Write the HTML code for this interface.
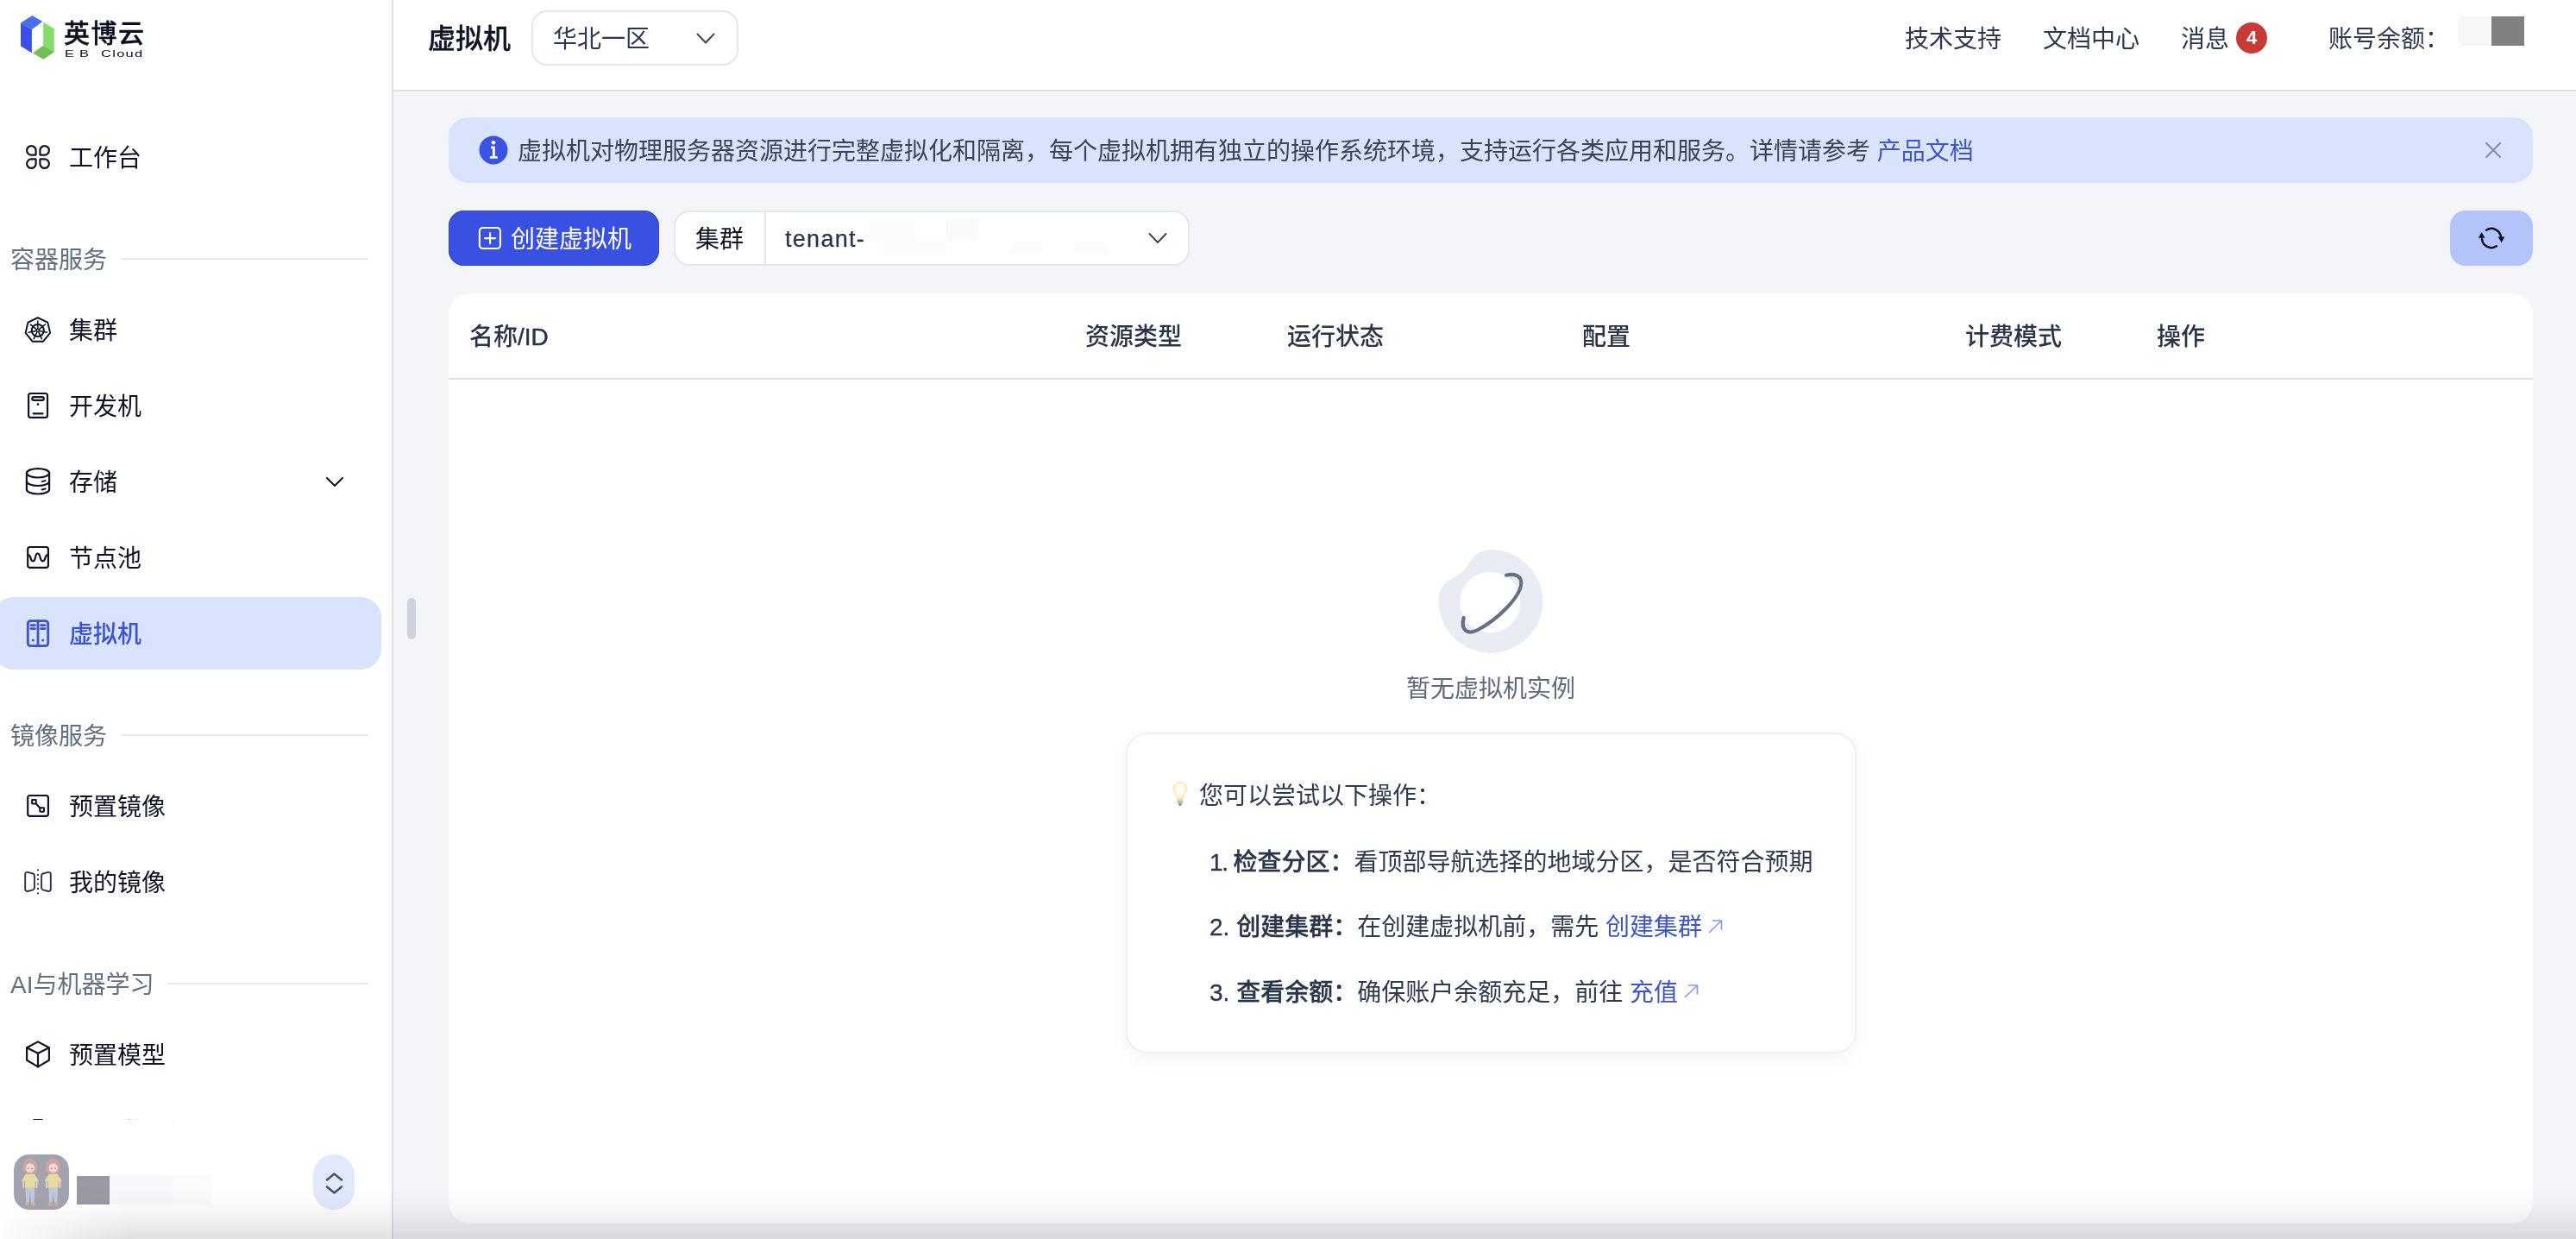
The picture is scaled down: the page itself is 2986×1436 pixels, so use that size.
<!DOCTYPE html>
<html lang="zh-CN">
<head>
<meta charset="utf-8">
<title>虚拟机 - 英博云</title>
<style>
*{box-sizing:border-box;margin:0;padding:0}
html,body{width:2986px;height:1436px;overflow:hidden;background:#f3f5f9}
body{font-family:"Liberation Sans","Noto Sans CJK SC",sans-serif;color:#0f1526;position:relative;-webkit-font-smoothing:antialiased}
.abs{position:absolute}
.t{position:absolute;white-space:nowrap;font-size:28px;line-height:40px;height:40px}
/* sidebar */
#side{position:absolute;left:0;top:0;width:456px;height:1436px;background:#fff;border-right:2px solid #dde0e7}
.nav{position:absolute;left:80px;font-size:28px;line-height:40px;height:40px;white-space:nowrap;color:#0f1526}
.sec{position:absolute;left:12px;font-size:28px;line-height:40px;height:40px;white-space:nowrap;color:#646e81}
.secline{position:absolute;height:2px;background:#e6e9ef}
.ico{position:absolute;overflow:visible}
/* header */
#head{position:absolute;left:456px;top:0;width:2530px;height:106px;background:#fff;border-bottom:2px solid #dcdfe6}
.hl{color:#2d3850}
.th{color:#2a3449;font-weight:500}
.tip{color:#2f3a50}
.tip b{font-weight:500;color:#2a3449;-webkit-text-stroke:0.3px #2a3449}
.lk{color:#3d55c9}
</style>
</head>
<body>
<div id="root" style="position:absolute;left:0;top:0;width:2986px;height:1436px;will-change:transform">
<div id="side">
  <!-- logo -->
  <svg class="ico" style="left:0;top:0" width="200" height="90" viewBox="0 0 200 90">
    <polygon points="37.3,18 49.3,25 36.9,34.3 24,26.4" fill="#4571ee"/>
    <polygon points="24,26.4 36.9,34.3 36.9,61.2 24,53.4" fill="#3a4fe8"/>
    <polygon points="50.2,25.6 62.8,33.4 62.8,60.4 50.2,52.8" fill="#87da6c"/>
    <polygon points="38,61.5 50.2,52.8 62.8,60.4 50.2,68.8" fill="#72bd56"/>
  </svg>
  <div class="abs" id="logocn" style="left:74px;top:17px;font-size:30px;line-height:44px;height:44px;font-weight:500;-webkit-text-stroke:0.35px #0b1020;letter-spacing:1.5px;color:#0b1020;white-space:nowrap">英博云</div>
  <div class="abs" id="logoen" style="left:75px;top:54px;font-size:11px;line-height:16px;height:16px;letter-spacing:4px;color:#0b1020;white-space:nowrap;transform-origin:0 50%;transform:scaleX(1.5)">EB</div>
  <div class="abs" id="logoen2" style="left:117px;top:54px;font-size:11px;line-height:16px;height:16px;letter-spacing:0.85px;color:#0b1020;white-space:nowrap;transform-origin:0 50%;transform:scaleX(1.5)">Cloud</div>

  <!-- 工作台 -->
  <svg class="ico" style="left:28px;top:166px" width="32" height="32" viewBox="-16 -16 32 32" fill="none" stroke="#0f1526" stroke-width="2.2" stroke-linejoin="round">
    <path id="petal" d="M-2.4 -7.65V-2.9a0.5 0.5 0 0 1-0.5 0.5H-7.65a5.25 5.25 0 1 1 5.25-5.25z"/>
    <path d="M-2.4 -7.65V-2.9a0.5 0.5 0 0 1-0.5 0.5H-7.65a5.25 5.25 0 1 1 5.25-5.25z" transform="scale(-1,1)"/>
    <path d="M-2.4 -7.65V-2.9a0.5 0.5 0 0 1-0.5 0.5H-7.65a5.25 5.25 0 1 1 5.25-5.25z" transform="scale(1,-1)"/>
    <path d="M-2.4 -7.65V-2.9a0.5 0.5 0 0 1-0.5 0.5H-7.65a5.25 5.25 0 1 1 5.25-5.25z" transform="scale(-1,-1)"/>
  </svg>
  <div class="nav" style="top:164px">工作台</div>

  <div class="sec" style="top:282px">容器服务</div>
  <div class="secline" style="left:140px;top:299px;width:286px"></div>

  <!-- 集群 -->
  <svg class="ico" style="left:26px;top:364px" width="36" height="36" viewBox="26 364 36 36" fill="none" stroke="#0f1526" stroke-linejoin="round" stroke-linecap="round">
    <g transform="translate(43.9 382.2) scale(0.955) translate(-43.9 -382.2)">
    <polygon points="43.8,367.6 55.8,373.2 58.8,386 50.4,396.3 37.2,396.3 29,386 31.9,373.2" stroke-width="2.05"/>
    <circle cx="43.8" cy="383" r="7.4" stroke-width="2.05"/>
    <g stroke-width="1.6">
      <line x1="43.8" y1="383" x2="43.8" y2="371.6"/>
      <line x1="43.8" y1="383" x2="52.7" y2="375.9"/>
      <line x1="43.8" y1="383" x2="54.9" y2="385.5"/>
      <line x1="43.8" y1="383" x2="48.7" y2="393.3"/>
      <line x1="43.8" y1="383" x2="38.9" y2="393.3"/>
      <line x1="43.8" y1="383" x2="32.7" y2="385.5"/>
      <line x1="43.8" y1="383" x2="34.9" y2="375.9"/>
    </g>
    <circle cx="43.8" cy="383" r="2.4" fill="#0f1526" stroke="none"/>
    <circle cx="43.8" cy="383" r="0.9" fill="#fff" stroke="none"/>
  </g>
  </svg>
  <div class="nav" style="top:364px">集群</div>

  <!-- 开发机 -->
  <svg class="ico" style="left:26px;top:452px" width="36" height="36" viewBox="26 452 36 36" fill="none" stroke="#0f1526" stroke-width="2.2" stroke-linecap="round">
    <rect x="33.1" y="456" width="21.9" height="27.8" rx="2.4"/>
    <rect x="37.3" y="460.1" width="13.5" height="3.7" rx="1.85"/>
    <circle cx="44" cy="468.6" r="1.4" fill="#0f1526" stroke="none"/>
    <line x1="38.6" y1="479.3" x2="49.6" y2="479.3"/>
  </svg>
  <div class="nav" style="top:452px">开发机</div>

  <!-- 存储 -->
  <svg class="ico" style="left:26px;top:540px" width="36" height="36" viewBox="26 540 36 36" fill="none" stroke="#0f1526" stroke-width="2.2" stroke-linecap="round">
    <ellipse cx="44" cy="548.3" rx="13.1" ry="5.2"/>
    <path d="M30.9 548.3V567.3C30.9 570.2 36.8 572.5 44 572.5S57.1 570.2 57.1 567.3V548.3"/>
    <path d="M30.9 557.8C30.9 560.7 36.8 563 44 563S57.1 560.7 57.1 557.8"/>
    <line x1="48.6" y1="558.1" x2="52.6" y2="557.1" stroke-width="2"/>
    <line x1="48.6" y1="567.5" x2="52.6" y2="566.5" stroke-width="2"/>
  </svg>
  <div class="nav" style="top:540px">存储</div>
  <svg class="ico" style="left:376px;top:548px" width="24" height="20" viewBox="376 548 24 20" fill="none" stroke="#0f1526" stroke-width="2" stroke-linecap="round" stroke-linejoin="round">
    <polyline points="379,554 388,563 397,554"/>
  </svg>

  <!-- 节点池 -->
  <svg class="ico" style="left:26px;top:628px" width="36" height="36" viewBox="26 628 36 36" fill="none" stroke="#0f1526" stroke-width="2.2" stroke-linecap="round">
    <rect x="32.2" y="634" width="23.7" height="23.9" rx="2.6"/>
    <path d="M32.6 643C36.6 643 34.4 650.3 38.3 650.3C42.2 650.3 39.8 641.5 43.7 641.5C47.6 641.5 45.5 650.3 49.4 650.3C53.3 650.3 51.4 643 55.4 643"/>
  </svg>
  <div class="nav" style="top:628px">节点池</div>

  <!-- 虚拟机 (active) -->
  <div class="abs" style="left:-8px;top:692px;width:450px;height:84px;border-radius:24px;background:#d9e3fc"></div>
  <svg class="ico" style="left:26px;top:716px" width="36" height="36" viewBox="26 716 36 36" fill="none" stroke="#3a52d6" stroke-width="2.8" stroke-linecap="round">
    <rect x="32.3" y="719.6" width="23.4" height="29" rx="3.2"/>
    <line x1="44" y1="719.6" x2="44" y2="748.6"/>
    <line x1="35.9" y1="724.6" x2="40.6" y2="724.6"/>
    <line x1="35.9" y1="728.6" x2="40.6" y2="728.6"/>
    <line x1="47.4" y1="724.6" x2="52.1" y2="724.6"/>
    <line x1="47.4" y1="728.6" x2="52.1" y2="728.6"/>
    <circle cx="38.3" cy="742" r="1.6" fill="#3a52d6" stroke="none"/>
    <circle cx="49.7" cy="742" r="1.6" fill="#3a52d6" stroke="none"/>
  </svg>
  <div class="nav" style="top:716px;color:#3a52d6;font-weight:500">虚拟机</div>

  <div class="sec" style="top:834px">镜像服务</div>
  <div class="secline" style="left:140px;top:851px;width:286px"></div>

  <!-- 预置镜像 -->
  <svg class="ico" style="left:26px;top:916px" width="36" height="36" viewBox="26 916 36 36" fill="none" stroke="#0f1526" stroke-width="2.2" stroke-linecap="round" stroke-linejoin="round">
    <rect x="32.2" y="922" width="23.7" height="23.8" rx="2.6"/>
    <rect x="37.1" y="927.1" width="4.7" height="4.4" rx="0.4" stroke-width="2" stroke-linejoin="miter"/>
    <rect x="46.3" y="936.3" width="4.7" height="4.4" rx="0.4" stroke-width="2" stroke-linejoin="miter"/>
    <line x1="42" y1="931.7" x2="46.2" y2="936.2" stroke-width="2"/>
  </svg>
  <div class="nav" style="top:916px">预置镜像</div>

  <!-- 我的镜像 -->
  <svg class="ico" style="left:26px;top:1004px" width="36" height="36" viewBox="26 1004 36 36" fill="none" stroke="#2a3347" stroke-width="1.9" stroke-linejoin="round">
    <path d="M29.2 1013.2a2.4 2.4 0 0 1 2.9-2.3l6 1.6a2.4 2.4 0 0 1 1.8 2.3v14.3a2.4 2.4 0 0 1-1.8 2.3l-6 1.6a2.4 2.4 0 0 1-2.9-2.3z"/>
    <path d="M58.8 1013.2a2.4 2.4 0 0 0-2.9-2.3l-6 1.6a2.4 2.4 0 0 0-1.8 2.3v14.3a2.4 2.4 0 0 0 1.8 2.3l6 1.6a2.4 2.4 0 0 0 2.9-2.3z"/>
    <line x1="44" y1="1007.5" x2="44" y2="1036.5" stroke="#141a2a" stroke-width="1.800" stroke-dasharray="1.800 3.600"/>
  </svg>
  <div class="nav" style="top:1004px">我的镜像</div>

  <div class="sec" style="top:1122px">AI与机器学习</div>
  <div class="secline" style="left:194px;top:1139px;width:232px"></div>

  <!-- 预置模型 -->
  <svg class="ico" style="left:26px;top:1204px" width="36" height="36" viewBox="26 1204 36 36" fill="none" stroke="#0f1526" stroke-width="2.2" stroke-linecap="round" stroke-linejoin="round">
    <polygon points="44,1207.4 56.9,1214.3 56.9,1228.7 44,1236.4 31.1,1228.7 31.1,1214.3"/>
    <polyline points="31.1,1214.3 44,1220.8 56.9,1214.3"/>
    <line x1="44" y1="1220.8" x2="44" y2="1236.4"/>
  </svg>
  <div class="nav" style="top:1204px">预置模型</div>

  <!-- clipped next item -->
  <div class="abs" style="left:0;top:1268px;width:454px;height:30px;overflow:hidden">
    <div class="nav" style="top:25px;left:137px">微调优</div>
    <div class="abs" style="left:38px;top:28.500px;width:12px;height:2px;background:#2a3040;border-radius:1px"></div>
  </div>

  <!-- user block -->
  <div class="abs" style="left:16px;top:1338px;width:64px;height:64px;border-radius:18px;background:#a3a3b0;overflow:hidden">
    <svg width="64" height="64" viewBox="0 0 64 64">
      <g id="girl" opacity="0.85">
        <path d="M10.500 15c0-6 3.600-10.200 8.400-10.200s8.400 4.200 8.400 10.200c0 3-1.200 5.400-2.400 6.400h-12c-1.200-1-2.400-3.400-2.400-6.400z" fill="#dba49c"/>
        <ellipse cx="18.900" cy="15.600" rx="5.200" ry="5.400" fill="#f6e4dc"/>
        <path d="M13.300 12.500c2-3 8-4 11.200 0c-1-4.500-9.500-5-11.200 0z" fill="#dba49c"/>
        <circle cx="16.700" cy="16.200" r="0.900" fill="#c9837c"/><circle cx="21.100" cy="16.200" r="0.900" fill="#c9837c"/>
        <path d="M14 22.500h9.800l5.200 8.200-3 1.600-1.200-1.800v8.300H13v-8.300l-1.200 1.800-3-1.600z" fill="#f3e3a0"/>
        <rect x="10.300" y="31" width="1.800" height="8" rx="0.900" fill="#f3dcd2"/>
        <rect x="25.700" y="31" width="1.800" height="8" rx="0.900" fill="#f3dcd2"/>
        <path d="M13.600 38.800h10.600l-0.600 17h-3.600l-1.100-13-1.100 13h-3.600z" fill="#c3d0e2"/>
        <rect x="13.200" y="55.600" width="4.800" height="4" rx="1.600" fill="#e0b48f"/>
        <rect x="19.800" y="55.600" width="4.800" height="4" rx="1.600" fill="#e0b48f"/>
      </g>
      <use href="#girl" x="26.800"/>
    </svg>
  </div>
  <div class="abs" style="left:89px;top:1363px;width:38px;height:33px;background:#9a9aa2"></div>
  <div class="abs" style="left:127px;top:1363px;width:73px;height:33px;background:#f8f8fc"></div><div class="abs" style="left:200px;top:1363px;width:45px;height:33px;background:#fbfbfe"></div>
  <div class="abs" style="left:363px;top:1338px;width:48px;height:64px;border-radius:24px;background:#e2e9fd"></div>
  <svg class="ico" style="left:375px;top:1354px" width="26" height="34" viewBox="375 1354 26 34" fill="none" stroke="#4a5468" stroke-width="2.6" stroke-linecap="round" stroke-linejoin="round">
    <polyline points="379,1367.4 387.5,1360.6 396,1367.4"/>
    <polyline points="379,1375.6 387.5,1382.4 396,1375.6"/>
  </svg>
</div>
<div id="head">
  <div class="abs" id="ptitle" style="left:40px;top:23px;font-size:32px;line-height:44px;height:44px;font-weight:500;-webkit-text-stroke:0.3px #0f1526;color:#0f1526;white-space:nowrap">虚拟机</div>
  <div class="abs" style="left:160px;top:12px;width:240px;height:64px;border:2px solid #e3e7ee;border-radius:18px;background:#fff"></div>
  <div class="t" id="region" style="left:185px;top:26px;color:#2d3850">华北一区</div>
  <svg class="ico" style="left:348px;top:34px" width="28" height="22" viewBox="0 0 28 22" fill="none" stroke="#3d475c" stroke-width="2" stroke-linecap="round" stroke-linejoin="round"><polyline points="4.500,5.500 14,15.500 23.500,5.500"/></svg>

  <div class="t hl" style="left:1752px;top:26px">技术支持</div>
  <div class="t hl" style="left:1912px;top:26px">文档中心</div>
  <div class="t hl" style="left:2072px;top:26px">消息</div>
  <div class="abs" style="left:2136px;top:26px;width:36px;height:36px;border-radius:18px;background:#c83a35;color:#fff;font-size:22px;line-height:36px;text-align:center;font-weight:700">4</div>
  <div class="t hl" style="left:2243px;top:26px">账号余额：</div>
  <div class="abs" style="left:2394px;top:19px;width:38px;height:34px;background:#f7f7f8"></div>
  <div class="abs" style="left:2432px;top:19px;width:38px;height:34px;background:#808080"></div>
</div>
<!-- sidebar resize handle -->
<div class="abs" style="left:472px;top:693px;width:10px;height:48px;border-radius:5px;background:#cdd3da"></div>

<!-- alert -->
<div class="abs" style="left:520px;top:136px;width:2416px;height:76px;border-radius:22px;background:#d9e3fc"></div>
<svg class="ico" style="left:555px;top:157px" width="34" height="34" viewBox="555 157 34 34">
  <circle cx="572" cy="173.900" r="16.5" fill="#3b53e0"/>
  <circle cx="571.9" cy="165.300" r="2.300" fill="#fff"/>
  <path d="M569.2 169.500h4.600v11.600h2.900v2.700h-8.800v-2.700h3.000v-8.900h-1.700z" fill="#fff"/>
</svg>
<div class="t" id="alerttxt" style="left:600px;top:156px;color:#3a4459">虚拟机对物理服务器资源进行完整虚拟化和隔离，每个虚拟机拥有独立的操作系统环境，支持运行各类应用和服务。详情请参考 <span style="color:#3d55c9">产品文档</span></div>
<svg class="ico" style="left:2878px;top:162px" width="24" height="24" viewBox="2878 162 24 24" fill="none" stroke="#8792a6" stroke-width="2.2" stroke-linecap="round"><line x1="2882.200" y1="166" x2="2898" y2="182"/><line x1="2898" y1="166" x2="2882.200" y2="182"/></svg>

<!-- toolbar -->
<div class="abs" style="left:520px;top:244px;width:244px;height:64px;border-radius:18px;background:#3951e0;box-shadow:inset 0 0 0 1px #3146c4"></div>
<svg class="ico" style="left:552px;top:260px" width="32" height="32" viewBox="552 260 32 32" fill="none" stroke="#fff" stroke-width="2.100" stroke-linecap="round">
  <rect x="555.900" y="264" width="24" height="24" rx="3.800"/>
  <line x1="562" y1="276.100" x2="574.200" y2="276.100"/><line x1="568.1" y1="270" x2="568.1" y2="282.200"/>
</svg>
<div class="t" id="createtxt" style="left:592px;top:258px;color:#fff">创建虚拟机</div>

<div class="abs" style="left:781px;top:244px;width:598px;height:64px;border:2px solid #e3e7ee;border-radius:18px;background:#fff"></div>
<div class="abs" style="left:886px;top:246px;width:2px;height:60px;background:#e3e7ee"></div>
<div class="t" style="left:806px;top:258px;color:#0f1526">集群</div>
<div class="t" id="tenant" style="left:910px;top:257px;color:#2b3348;font-size:27px;letter-spacing:1.3px;-webkit-text-stroke:0.25px #2b3348">tenant-</div>
<div class="abs" style="left:1007px;top:255px;width:54px;height:24px;background:#fcfcfd"></div>
<div class="abs" style="left:1097px;top:255px;width:37px;height:24px;background:#fafafb"></div>
<div class="abs" style="left:1023px;top:279px;width:74px;height:16px;background:#fcfcfd"></div>
<div class="abs" style="left:1172px;top:280px;width:36px;height:14px;background:#fbfbf9"></div>
<div class="abs" style="left:1246px;top:280px;width:38px;height:14px;background:#fbfcfa"></div>
<svg class="ico" style="left:1328px;top:264px" width="28" height="24" viewBox="0 0 28 24" fill="none" stroke="#3d475c" stroke-width="2" stroke-linecap="round" stroke-linejoin="round"><polyline points="4.500,7 14,17 23.500,7"/></svg>

<div class="abs" style="left:2840px;top:244px;width:96px;height:64px;border-radius:18px;background:#b4c4fb"></div>
<svg class="ico" style="left:2868px;top:256px" width="40" height="40" viewBox="2868 256 40 40" fill="none" stroke="#0b1020" stroke-width="2.500" stroke-linecap="round">
  <path d="M2882.100 266.700A11 11 0 0 1 2899 275"/>
  <path d="M2893.900 285.300A11 11 0 0 1 2877 277"/>
  <polygon points="2895.600,274.400 2903.300,274.400 2899.600,281.200" fill="#0b1020" stroke="none"/>
  <polygon points="2872.900,275.700 2880.500,275.700 2876.600,268.900" fill="#0b1020" stroke="none"/>
</svg>

<!-- table card -->
<div class="abs" style="left:520px;top:340px;width:2416px;height:1078px;border-radius:24px;background:#fff"></div>
<div class="abs" style="left:520px;top:438px;width:2416px;height:2px;background:#dfe2ea"></div>
<div class="t th" style="left:544px;top:371px">名称<span style="-webkit-text-stroke:0.5px #2a3449">/ID</span></div>
<div class="t th" style="left:1258px;top:371px">资源类型</div>
<div class="t th" style="left:1492px;top:371px">运行状态</div>
<div class="t th" style="left:1834px;top:371px">配置</div>
<div class="t th" style="left:2278px;top:371px">计费模式</div>
<div class="t th" style="left:2500px;top:371px">操作</div>

<!-- empty state -->
<svg class="ico" style="left:1660px;top:630px" width="136" height="134" viewBox="1660 630 136 134">
  <path d="M1728 637C1761 637 1788.400 664 1788.400 697C1788.400 730 1761 756.700 1728 756.700C1695 756.700 1667.700 730 1667.700 697C1667.700 684 1673 676 1683 671C1696 664 1700 657 1706 648C1711 641 1719 637 1728 637Z" fill="#e9ecf2"/>
  <circle cx="1727.300" cy="698" r="35.200" fill="#fff"/>
  <path d="M1746 666.700C1755 664.500 1763.700 667 1763.300 676C1762.500 692 1736 718 1713 730C1700.500 736.500 1693 730 1696.700 716" fill="none" stroke="#667085" stroke-width="4.200" stroke-linecap="round"/>
</svg>
<div class="t" id="emptytxt" style="left:1630px;top:779px;color:#5f6a7e">暂无虚拟机实例</div>

<!-- tips card -->
<div class="abs" style="left:1305px;top:849px;width:847px;height:372px;border-radius:25px;background:#fff;border:2px solid #eff1f7;box-shadow:0 6px 22px rgba(30,40,90,0.05)"></div>
<svg class="ico" style="left:1356px;top:902px" width="24" height="36" viewBox="1356 902 24 36">
  <defs><radialGradient id="bg1" cx="0.5" cy="0.42" r="0.62"><stop offset="0" stop-color="#ffffff"/><stop offset="0.45" stop-color="#fffbea"/><stop offset="1" stop-color="#f8e6a2"/></radialGradient>
  <linearGradient id="bg2" x1="0" y1="0" x2="0" y2="1"><stop offset="0" stop-color="#e4e2dc"/><stop offset="0.7" stop-color="#a9a8a4"/><stop offset="1" stop-color="#2e2e2e"/></linearGradient></defs>
  <path d="M1367.900 906.800c4.400 0 7.800 3.300 7.800 7.600 0 2.700-1.300 4.400-2.500 6.100-0.900 1.300-1.500 2.800-1.700 5.500h-7.200c-0.200-2.700-0.800-4.200-1.700-5.500-1.200-1.700-2.500-3.400-2.500-6.100 0-4.300 3.400-7.600 7.800-7.600z" fill="url(#bg1)" stroke="#f5e3a0" stroke-width="0.900"/>
  <polygon points="1364.400,926 1371.400,926 1371.200,930 1369.600,932.600 1367.900,934 1366.200,932.600 1364.600,930" fill="url(#bg2)"/>
</svg>
<div class="t tip" style="left:1390px;top:903px">您可以尝试以下操作：</div>
<div class="t tip" id="tip1" style="left:1402px;top:980px"><b><span style="letter-spacing:-1.2px">1. </span>检查分区：</b>看顶部导航选择的地域分区，是否符合预期</div>
<div class="t tip" id="tip2" style="left:1402px;top:1055px"><b>2. 创建集群：</b>在创建虚拟机前，需先 <span class="lk">创建集群</span></div>
<div class="t tip" id="tip3" style="left:1402px;top:1131px"><b>3. 查看余额：</b>确保账户余额充足，前往 <span class="lk">充值</span></div>
<svg class="ico" style="left:1978px;top:1063px" width="22" height="22" viewBox="0 0 22 22" fill="none" stroke="#8a9bea" stroke-width="1.700" stroke-linecap="round" stroke-linejoin="round"><path d="M3.500 17.500L17.500 4M7.500 4h10v10"/></svg>
<svg class="ico" style="left:1950px;top:1138px" width="22" height="22" viewBox="0 0 22 22" fill="none" stroke="#8a9bea" stroke-width="1.700" stroke-linecap="round" stroke-linejoin="round"><path d="M3.500 17.500L17.500 4M7.500 4h10v10"/></svg>
<div class="abs" style="left:0;top:1376px;width:2986px;height:60px;background:linear-gradient(to bottom,rgba(20,20,40,0) 0%,rgba(20,20,40,0.035) 45%,rgba(20,20,40,0.13) 100%);-webkit-mask-image:linear-gradient(to right,rgba(0,0,0,0.1) 0,rgba(0,0,0,1) 150px);mask-image:linear-gradient(to right,rgba(0,0,0,0.1) 0,rgba(0,0,0,1) 150px);pointer-events:none"></div>
</div>
</body>
</html>
